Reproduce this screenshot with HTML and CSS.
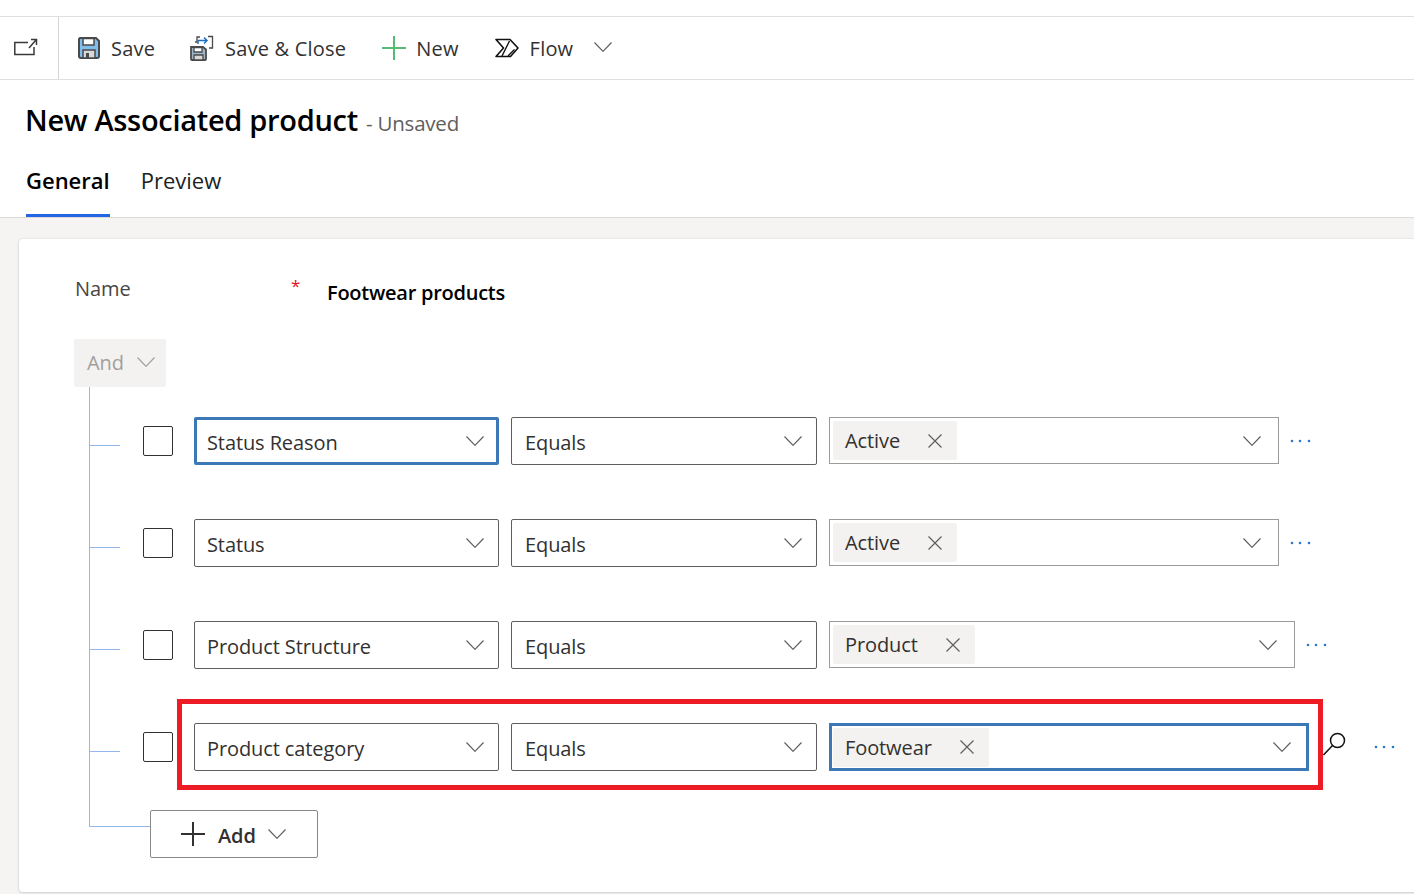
FILE: index.html
```html
<!DOCTYPE html>
<html>
<head>
<title>New Associated product</title>
<meta charset="utf-8" />
<link rel="stylesheet" href="styles.css">
</head>
<body>

<svg class="sprite" width="0" height="0">
	<symbol id="chev" viewBox="0 0 18 10"><path d="M.5.5 9 9.3 17.5.5" fill="none" stroke="currentColor" stroke-width="1.2"/></symbol>
	<symbol id="close" viewBox="0 0 14 14"><path d="M.5.5l13 13M13.5.5l-13 13" fill="none" stroke="currentColor" stroke-width="1.2"/></symbol>
	<symbol id="dots" viewBox="0 0 24 4"><circle cx="4" cy="2" r="1.3"/><circle cx="12" cy="2" r="1.3"/><circle cx="21" cy="2" r="1.3"/></symbol>
	<symbol id="plus" viewBox="0 0 24 24"><path d="M12 0v24M0 12h24" fill="none" stroke="currentColor" stroke-width="2"/></symbol>
</svg>

<div id="toolbar">
	<div class="popout">
		<svg width="24" height="20" viewBox="0 0 24 20"><path d="M14 4.500H.8V16.500H20V9" fill="none" stroke="#3b3a39" stroke-width="1.500"/><path d="M15 10 22 2M17 1.500h5.500V7" fill="none" stroke="#3b3a39" stroke-width="1.500"/></svg>
	</div>
	<a class="cmd cmd-save">
		<svg width="22" height="22" viewBox="0 0 22 22"><path d="M2 1h16l3 3v15a2 2 0 0 1-2 2H3a2 2 0 0 1-2-2V2z" fill="#83bdea" stroke="#4a4a4a" stroke-width="2"/><path d="M5 1.500h11V8H5z" fill="#fff" stroke="#4a4a4a" stroke-width="1.500"/><path d="M5 21v-8h12v8z" fill="#d8d8d8" stroke="#4a4a4a" stroke-width="1.500"/><path d="M8 16h3v5H8z" fill="#4a4a4a"/></svg>
		<span>Save</span>
	</a>
	<a class="cmd cmd-saveclose">
		<svg width="24" height="26" viewBox="0 0 24 26"><path d="M1 12h12l3 2.500V24a1 1 0 0 1-1 1H2a1 1 0 0 1-1-1z" fill="#9fb7c9" stroke="#4a4a4a" stroke-width="1.800"/><path d="M4 12.500h8V17H4z" fill="#fff" stroke="#4a4a4a" stroke-width="1.300"/><path d="M4 25v-5h9v5z" fill="#d8d8d8" stroke="#4a4a4a" stroke-width="1.300"/><path d="M5 7h2V2h3M18 1.500h4.500V13H19" fill="none" stroke="#4a4a4a" stroke-width="1.300"/><path d="M8 9V5.500h9M14 2.500l3 3-3 3" fill="none" stroke="#1f6fc0" stroke-width="1.500"/></svg>
		<span>Save &amp; Close</span>
	</a>
	<a class="cmd cmd-new">
		<svg class="green" width="24" height="24"><use href="#plus"/></svg>
		<span>New</span>
	</a>
	<a class="cmd">
		<svg width="24" height="20" viewBox="0 0 24 20"><path d="M1 1.500h14l8 8.500-7.500 8.500H1L8.500 10z" fill="none" stroke="#111" stroke-width="1.600" stroke-linejoin="round"/><path d="M14.500 3 7 18M19.500 11.500 13 18" fill="none" stroke="#111" stroke-width="1.400"/></svg>
		<span>Flow</span>
		<svg class="chev flow-chev"><use href="#chev"/></svg>
	</a>
</div>

<div id="header">
	<h1><b>New Associated product</b> <span>- Unsaved</span></h1>
	<div class="tabs">
		<a class="tab on">General</a>
		<a class="tab">Preview</a>
	</div>
</div>

<div id="content">
	<div class="card">
		<div class="name-row">
			<label>Name</label>
			<i>*</i>
			<strong>Footwear products</strong>
		</div>
		<div class="and">And <svg class="chev"><use href="#chev"/></svg></div>

		<div class="tree">
			<div class="row">
				<span class="check"></span>
				<div class="field focus">Status Reason<svg class="chev"><use href="#chev"/></svg></div>
				<div class="field op">Equals<svg class="chev"><use href="#chev"/></svg></div>
				<div class="value w450"><span class="chip">Active<svg class="x"><use href="#close"/></svg></span><svg class="chev"><use href="#chev"/></svg></div>
				<svg class="dots"><use href="#dots"/></svg>
			</div>
			<div class="row">
				<span class="check"></span>
				<div class="field">Status<svg class="chev"><use href="#chev"/></svg></div>
				<div class="field op">Equals<svg class="chev"><use href="#chev"/></svg></div>
				<div class="value w450"><span class="chip">Active<svg class="x"><use href="#close"/></svg></span><svg class="chev"><use href="#chev"/></svg></div>
				<svg class="dots"><use href="#dots"/></svg>
			</div>
			<div class="row">
				<span class="check"></span>
				<div class="field">Product Structure<svg class="chev"><use href="#chev"/></svg></div>
				<div class="field op">Equals<svg class="chev"><use href="#chev"/></svg></div>
				<div class="value w466"><span class="chip">Product<svg class="x"><use href="#close"/></svg></span><svg class="chev"><use href="#chev"/></svg></div>
				<svg class="dots"><use href="#dots"/></svg>
			</div>
			<div class="row">
				<span class="check"></span>
				<div class="field">Product category<svg class="chev"><use href="#chev"/></svg></div>
				<div class="field op">Equals<svg class="chev"><use href="#chev"/></svg></div>
				<div class="value w480 focus"><span class="chip">Footwear<svg class="x"><use href="#close"/></svg></span><svg class="chev"><use href="#chev"/></svg></div>
				<svg class="search" width="25" height="25" viewBox="0 0 25 25"><circle cx="15.500" cy="8.500" r="7" fill="none" stroke="#111" stroke-width="1.500"/><path d="M10.500 13.500 1.500 23" fill="none" stroke="#111" stroke-width="1.500"/></svg>
				<svg class="dots dots-far"><use href="#dots"/></svg>
				<div class="redbox"></div>
			</div>
			<a class="add">
				<svg class="dark" width="24" height="24"><use href="#plus"/></svg>
				<span>Add</span>
				<svg class="chev"><use href="#chev"/></svg>
			</a>
		</div>
	</div>
</div>

</body>
</html>
```

FILE: styles.css
```css
html, body {
	margin:0;
	height:100%;
	overflow:hidden;
}
body {
	padding-top:16px;
	box-sizing:border-box;
	background:#fff;
	color:#323130;
	font-family:"Open Sans","Noto Sans","Liberation Sans",sans-serif;
	font-size:20px;
	letter-spacing:-0.1px;
}
.sprite {
	display:block;
	height:0;
}

/* command bar */
#toolbar {
	display:flex;
	align-items:center;
	height:62px;
	border-top:1px solid #e1dfdd;
	border-bottom:1px solid #e1dfdd;
	letter-spacing:0.2px;
}
#toolbar svg {
	display:block;
	flex:none;
}
.popout {
	width:59px;
	height:62px;
	box-sizing:border-box;
	border-right:1px solid #d8d6d4;
	padding:21px 0 0 14px;
}
.cmd {
	display:flex;
	align-items:center;
	gap:11px;
	margin-left:36px;
}
.cmd-save {
	margin-left:19px;
}
.cmd-saveclose {
	margin-left:35px;
}
.cmd-new {
	gap:10px;
}
.green {
	color:#57bb76;
}
.dark {
	color:#323130;
}
svg.flow-chev {
	margin:-3px 0 0 10px;
}

/* title and tabs */
#header {
	padding-left:26px;
	border-bottom:1px solid #dcdad8;
	height:138px;
	box-sizing:border-box;
}
#header h1 {
	margin:0 0 0 -1px;
	padding-top:20px;
	height:40px;
	font-size:inherit;
	font-weight:normal;
	line-height:40px;
	white-space:nowrap;
}
#header h1 b {
	font-size:29px;
	font-weight:600;
	color:#000;
	letter-spacing:-0.3px;
}
#header h1 span {
	margin-left:3px;
	font-size:20.5px;
	letter-spacing:-0.2px;
	color:#605e5c;
}
.tabs {
	display:flex;
	gap:31px;
}
.tab {
	padding:26px 0 20px;
	line-height:28px;
	height:28px;
	font-size:22px;
	letter-spacing:0;
	color:#201f1e;
	border-bottom:3px solid transparent;
}
.tab.on {
	font-weight:600;
	color:#000;
	border-bottom-color:#2266e3;
}

/* form */
#content {
	background:#f5f4f3;
	height:676px;
	padding:21px 0 0 19px;
}
.card {
	height:653px;
	margin-right:-10px;
	padding-left:55px;
	box-sizing:border-box;
	background:#fff;
	border-radius:4px;
	box-shadow:0 0 2px rgba(0,0,0,.12), 0 1px 3px rgba(0,0,0,.12);
	padding-top:30px;
}
.name-row {
	display:flex;
	height:48px;
}
.name-row label {
	width:216px;
	padding-left:1px;
	line-height:40px;
	color:#484644;
}
.name-row i {
	width:36px;
	font-style:normal;
	font-size:17px;
	color:#e81123;
	line-height:34px;
}
.name-row strong {
	font-weight:600;
	letter-spacing:-0.25px;
	color:#000;
	line-height:48px;
}
.and {
	display:flex;
	align-items:center;
	gap:13px;
	width:92px;
	height:48px;
	box-sizing:border-box;
	margin-top:22px;
	padding:0 0 2px 13px;
	background:#f3f2f1;
	border-radius:2px;
	color:#a19f9d;
}
.chev {
	display:block;
	flex:none;
	width:18px;
	height:10px;
	color:#605e5c;
}
.and .chev {
	color:#a19f9d;
}

/* condition rows, the connector lines hang off the left side */
.tree {
	position:relative;
	margin-left:15px;
	padding:30px 0 0 54px;
}
.tree:before {
	content:"";
	position:absolute;
	left:0;
	top:0;
	bottom:31px;
	width:61px;
	border-left:1px solid #94b8ee;
	border-bottom:1px solid #94b8ee;
}
.row {
	position:relative;
	display:flex;
	align-items:flex-start;
	height:48px;
	margin-bottom:54px;
}
.row:before {
	content:"";
	position:absolute;
	left:-54px;
	top:28px;
	width:31px;
	border-top:1px solid #94b8ee;
}
.check {
	flex:none;
	width:28px;
	height:28px;
	margin:9px 21px 0 0;
	border:1px solid #323130;
	border-radius:2px;
}
.field {
	display:flex;
	align-items:center;
	justify-content:space-between;
	flex:none;
	width:305px;
	height:48px;
	box-sizing:border-box;
	padding:3px 14px 0 12px;
	margin-right:12px;
	border:1px solid #605e5c;
	border-radius:2px;
}
.field.op {
	width:306px;
	padding-left:13px;
}
.field .chev {
	margin-top:-3px;
}
.field.focus {
	border:3px solid #3b78b5;
	padding:3px 12px 0 10px;
}
.value {
	display:flex;
	align-items:center;
	justify-content:space-between;
	flex:none;
	height:47px;
	box-sizing:border-box;
	padding:0 17px 0 3px;
	border:1px solid #9b9b9b;
}
.w450 {
	width:450px;
}
.w466 {
	width:466px;
}
.w480 {
	width:480px;
	height:48px;
}
.value.focus {
	border:3px solid #3b78b5;
	padding:0 15px 0 1px;
}
.chip {
	display:flex;
	align-items:center;
	height:39px;
	padding:0 15px 0 12px;
	background:#f3f2f1;
	border-radius:2px;
}
.x {
	display:block;
	width:14px;
	height:14px;
	margin-left:28px;
	color:#605e5c;
}
.dots {
	flex:none;
	width:24px;
	height:4px;
	margin:22px 0 0 9px;
	fill:#2b79c9;
}
.search {
	flex:none;
	margin:9px 0 0 13px;
}
.dots-far {
	margin-left:25px;
}
.redbox {
	position:absolute;
	left:34px;
	top:-24px;
	width:1136px;
	height:81px;
	border:5px solid #ed1c24;
}
.add {
	display:flex;
	align-items:center;
	position:relative;
	width:168px;
	height:48px;
	box-sizing:border-box;
	margin:-15px 0 0 7px;
	padding-left:30px;
	background:#fff;
	border:1px solid #8a8886;
	border-radius:2px;
	font-weight:600;
}
.add span {
	margin-left:13px;
	padding-top:3px;
}
.add .chev {
	margin-left:12px;
}
```
